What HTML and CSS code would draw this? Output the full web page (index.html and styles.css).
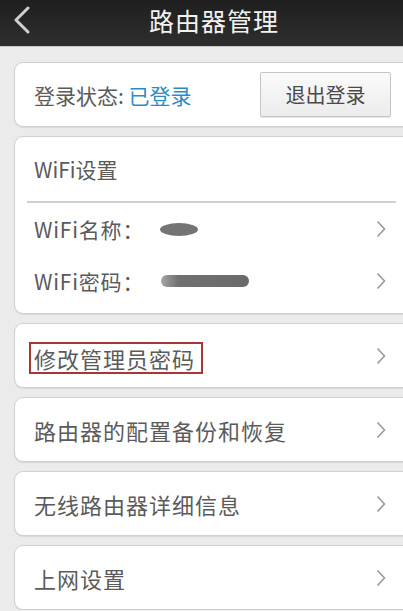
FILE: index.html
```html
<!DOCTYPE html>
<html lang="zh-CN">

<head>
    <meta charset="UTF-8">
    <meta name="viewport" content="width=device-width, initial-scale=1.0">
    <title>路由器管理</title>
    <link rel="stylesheet" href="styles.css">
</head>

<body>
    <header class="topbar">
        <a class="back" href="#">
            <svg width="18" height="28" viewBox="0 0 18 28">
                <path d="M15 2 L3 14 L15 26" fill="none" stroke="#cfcfcf" stroke-width="3" stroke-linecap="round" stroke-linejoin="round"/>
            </svg>
        </a>
        <h1 class="title">路由器管理</h1>
    </header>

    <main class="list">
        <section class="card login-card">
            <div class="login-state">登录状态: <span class="state-on">已登录</span></div>
            <button class="logout" type="button">退出登录</button>
        </section>

        <section class="card wifi-card">
            <div class="card-head">WiFi设置</div>
            <div class="divider"></div>
            <div class="row">
                <span class="row-label">WiFi名称：<span class="smudge smudge-name"></span></span>
                <svg class="chev" width="10" height="18" viewBox="0 0 10 18"><path d="M1.5 1.5 L8.5 9 L1.5 16.5" fill="none" stroke="#999" stroke-width="1.6"/></svg>
            </div>
            <div class="row">
                <span class="row-label">WiFi密码：<span class="smudge smudge-pass"></span></span>
                <svg class="chev" width="10" height="18" viewBox="0 0 10 18"><path d="M1.5 1.5 L8.5 9 L1.5 16.5" fill="none" stroke="#999" stroke-width="1.6"/></svg>
            </div>
        </section>

        <section class="card item">
            <span class="row-label marked">修改管理员密码</span>
            <svg class="chev" width="10" height="18" viewBox="0 0 10 18"><path d="M1.5 1.5 L8.5 9 L1.5 16.5" fill="none" stroke="#999" stroke-width="1.6"/></svg>
        </section>

        <section class="card item">
            <span class="row-label">路由器的配置备份和恢复</span>
            <svg class="chev" width="10" height="18" viewBox="0 0 10 18"><path d="M1.5 1.5 L8.5 9 L1.5 16.5" fill="none" stroke="#999" stroke-width="1.6"/></svg>
        </section>

        <section class="card item">
            <span class="row-label">无线路由器详细信息</span>
            <svg class="chev" width="10" height="18" viewBox="0 0 10 18"><path d="M1.5 1.5 L8.5 9 L1.5 16.5" fill="none" stroke="#999" stroke-width="1.6"/></svg>
        </section>

        <section class="card item">
            <span class="row-label">上网设置</span>
            <svg class="chev" width="10" height="18" viewBox="0 0 10 18"><path d="M1.5 1.5 L8.5 9 L1.5 16.5" fill="none" stroke="#999" stroke-width="1.6"/></svg>
        </section>
    </main>
</body>

</html>
```

FILE: styles.css
```css
/* General Styles */
body {
    font-family: "Noto Sans CJK SC", "Noto Sans", sans-serif;
    margin: 0;
    padding: 0;
    background-color: #ebebeb;
    overflow: hidden;
    color: #5b5b5b;
}

/* Top bar */
.topbar {
    height: 47px;
    display: flex;
    align-items: center;
    padding-left: 13px;
    background: linear-gradient(#1f1f1f, #2e2e2e);
    border-bottom: 1px solid #c9c9c9;
    box-sizing: border-box;
}

.back {
    display: flex;
    align-items: center;
    margin-top: -6px;
}

.title {
    flex: 1;
    margin: 0;
    padding-right: 6px;
    text-align: center;
    font-size: 25px;
    font-weight: normal;
    letter-spacing: 1px;
    color: #f2f2f2;
    margin-top: -6px;
}

/* Card list */
.list {
    display: flex;
    flex-direction: column;
    gap: 9px;
    padding: 15px 0 0 14px;
}

.card {
    width: 399px;
    box-sizing: border-box;
    background: #ffffff;
    border: 1px solid #d0d0d0;
    border-radius: 9px;
    box-shadow: 0 1px 1px rgba(0, 0, 0, 0.08);
}

.login-card,
.item {
    height: 65px;
    display: flex;
    align-items: center;
    justify-content: space-between;
    padding: 0 26px 0 19px;
}

.login-card {
    padding-right: 21px;
}

.login-state {
    font-size: 21px;
}

.state-on {
    color: #2b8cc4;
}

.logout {
    width: 131px;
    height: 45px;
    font-family: inherit;
    font-size: 20px;
    color: #4a4a4a;
    background: linear-gradient(#fafafa, #ececec);
    border: 1px solid #c6c6c6;
    border-radius: 2px;
    box-shadow: 0 1px 1px rgba(0, 0, 0, 0.1);
}

/* WiFi card */
.wifi-card {
    height: 178px;
}

.card-head {
    height: 64px;
    display: flex;
    align-items: center;
    padding-left: 19px;
    font-size: 21px;
}

.divider {
    height: 2px;
    margin: 0 16px 0 12px;
    background: #cfcfcf;
}

.row {
    height: 52px;
    display: flex;
    align-items: center;
    justify-content: space-between;
    padding: 0 26px 0 19px;
}

.row-label {
    font-size: 21px;
    letter-spacing: 0.8px;
    display: flex;
    align-items: center;
}

.item .row-label {
    font-size: 22px;
    letter-spacing: 1px;
}

.smudge {
    display: inline-block;
    background: #747474;
    border-radius: 50%;
    filter: blur(0.6px);
}

.smudge-name {
    width: 38px;
    height: 13px;
    margin-left: 16px;
}

.smudge-pass {
    width: 88px;
    height: 12px;
    margin-left: 17px;
    border-radius: 8px;
    background: linear-gradient(90deg, #a5a5a5, #707070 20%, #6a6a6a);
}

.chev {
    flex-shrink: 0;
}

/* Highlight box */
.marked {
    height: 32px;
    padding: 0 6px 0 3px;
    margin-left: -5px;
    margin-top: 5px;
    border: 2px solid #a83636;
    box-sizing: border-box;
}
```
